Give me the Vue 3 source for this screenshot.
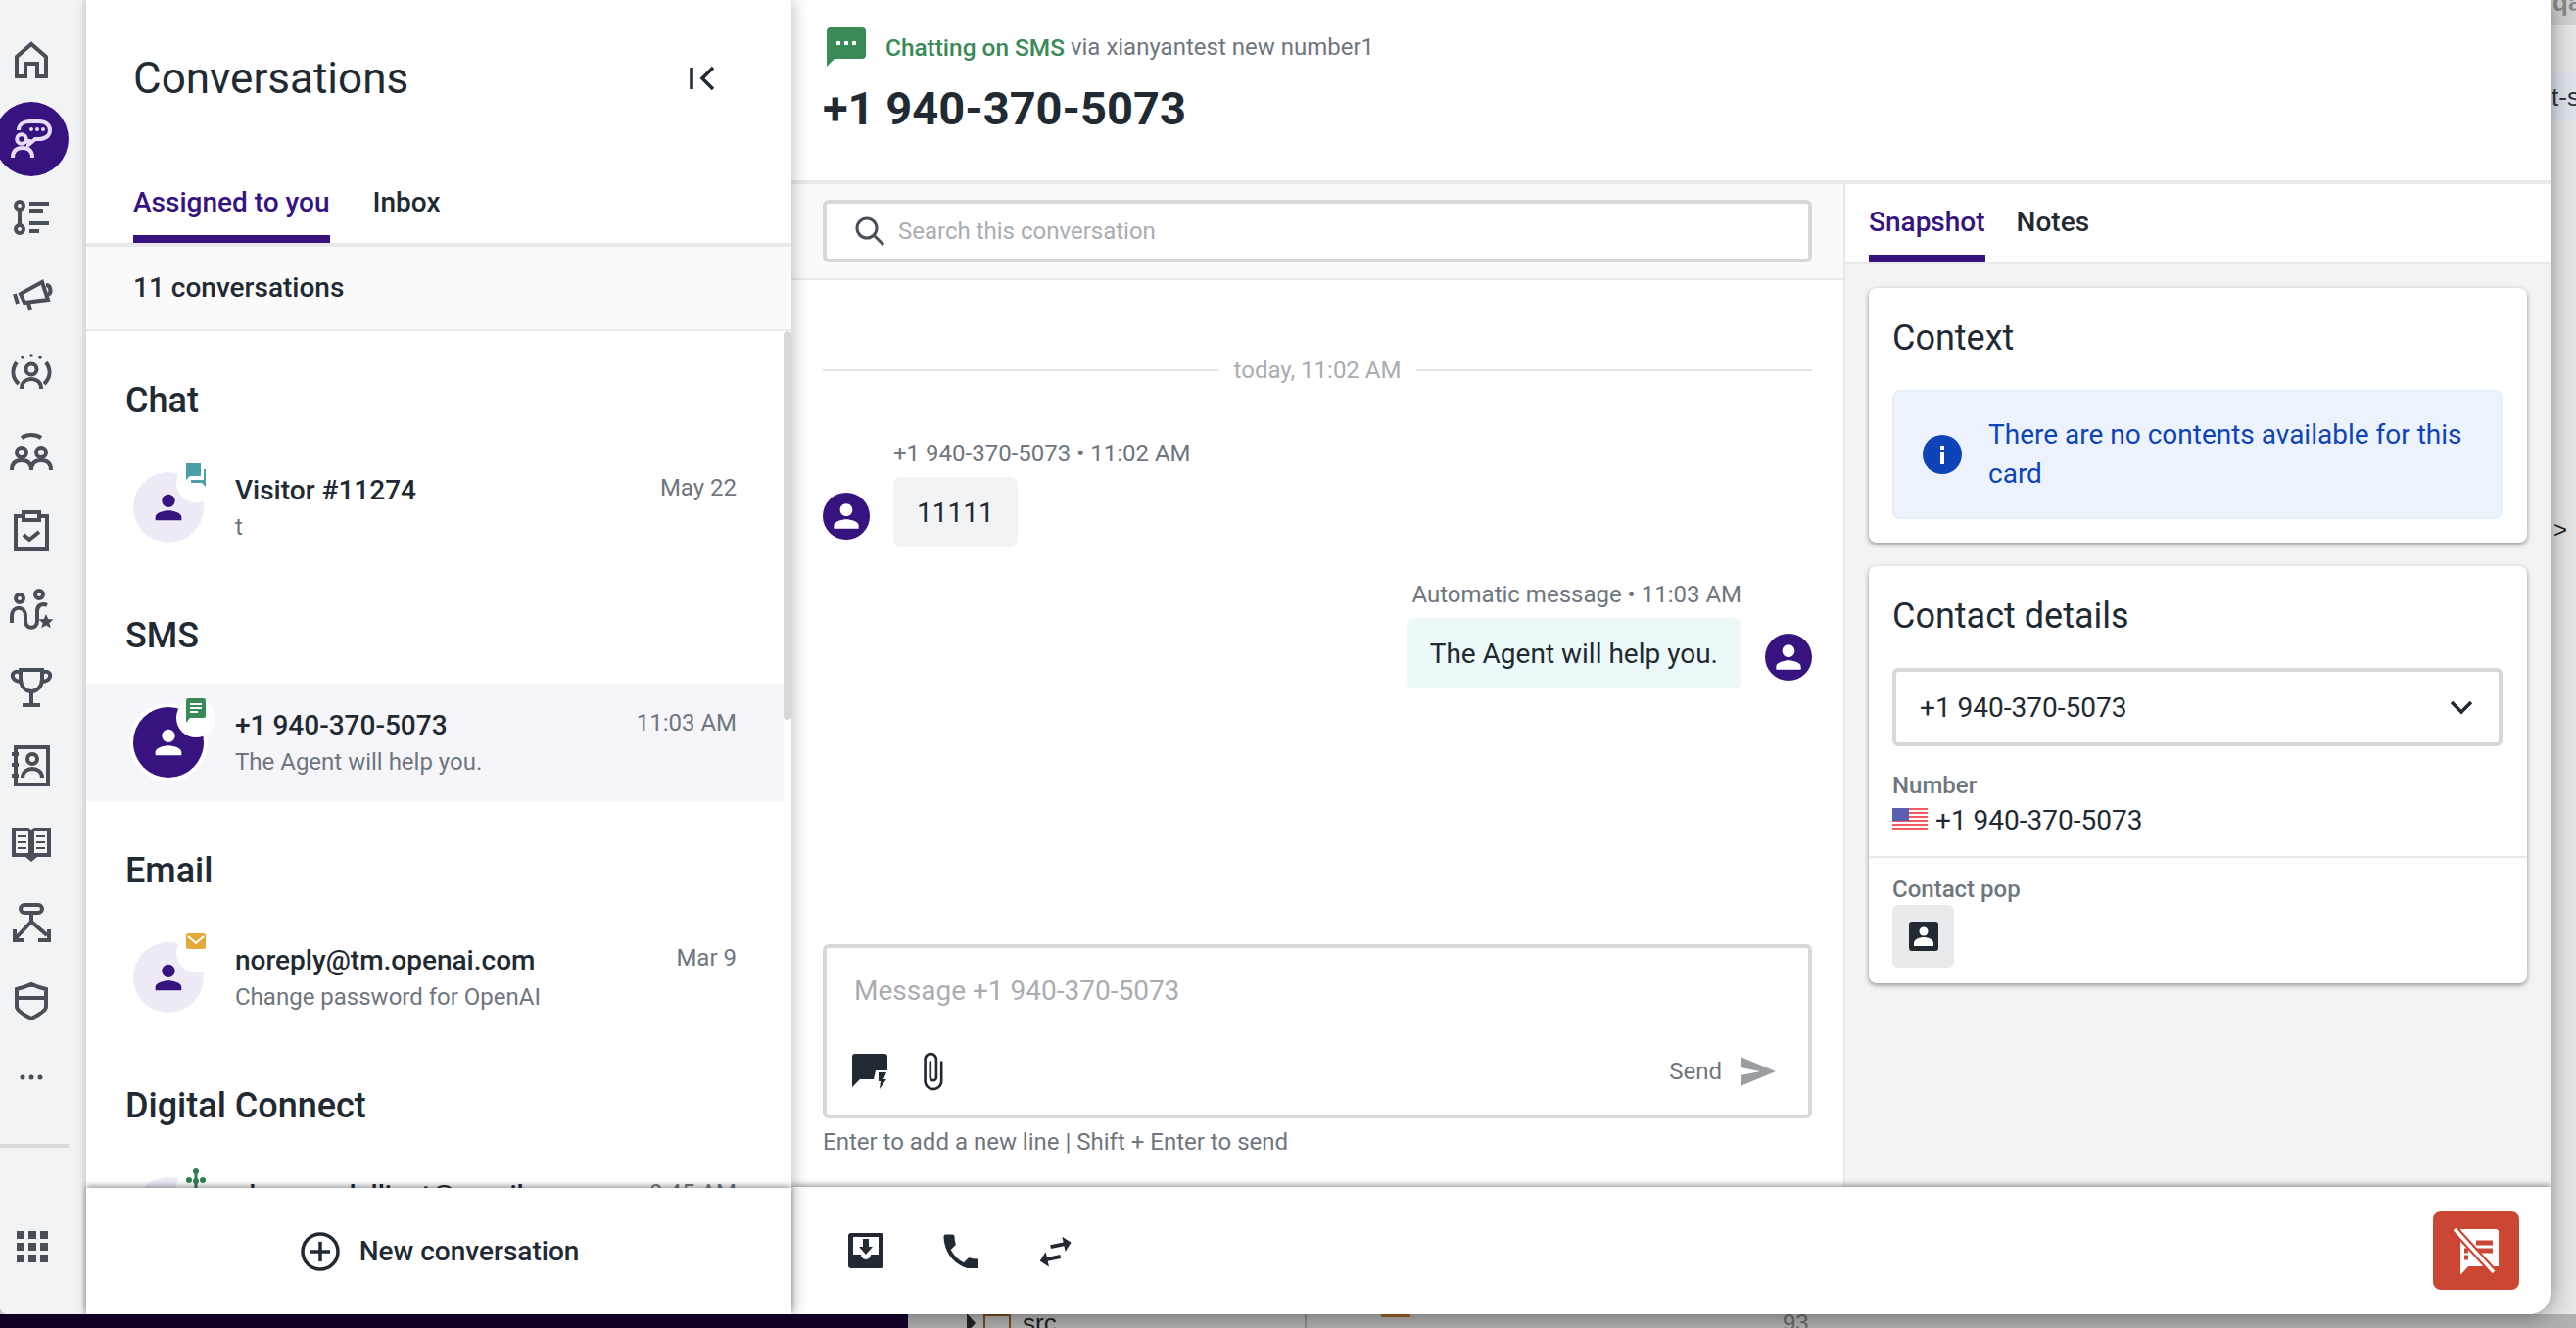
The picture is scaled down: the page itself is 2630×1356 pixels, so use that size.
<template>
  <div class="desktop">
    <div class="top">
      <div class="window">
        <!-- icon rail -->
        <nav class="rail">
          <div class="nav-item">
            <svg class="nav-icon" viewBox="0 0 48 48"><path d="M9 40V20L24 7l15 13v20h-9V27H18v13z" /></svg>
          </div>
          <div class="nav-item nav-item--active">
            <span class="nav-active">
              <svg class="nav-icon nav-icon--active" viewBox="0 0 48 48">
                <path d="M11 15c0-6 5-9 11-9h10c7 0 11 4 11 9s-4 9-11 9h-4l-7 6 1-6" />
                <circle class="dot" cx="24" cy="14" r="2" />
                <circle class="dot" cx="30" cy="14" r="2" />
                <circle class="dot" cx="36" cy="14" r="2" />
                <circle cx="14" cy="24" r="4.800" />
                <path d="M5 43c0-7 4-10 10-10s10 3 10 10" />
              </svg>
            </span>
          </div>
          <div class="nav-item">
            <svg class="nav-icon" viewBox="0 0 48 48">
              <circle cx="12" cy="12" r="4" /><circle cx="12" cy="36" r="4" />
              <path d="M12 16v16M22 10h20M22 17h14M22 30h20M22 38h10" />
            </svg>
          </div>
          <div class="nav-item">
            <svg class="nav-icon" viewBox="0 0 48 48">
              <path d="M13 22l22-12 6 18-24 3z" />
              <path d="M7 22l3 10M21 31l2 8M39 13c5 0 6 8 2 10" />
            </svg>
          </div>
          <div class="nav-item">
            <svg class="nav-icon" viewBox="0 0 48 48">
              <circle cx="24" cy="19" r="5.500" />
              <path d="M14 39c0-7 5-10 10-10s10 3 10 10M9 12c-5 7-5 15 2 22M39 12c5 7 5 15-2 22" />
              <circle class="dot" cx="15" cy="7" r="1.800" /><circle class="dot" cx="24" cy="5" r="1.800" /><circle class="dot" cx="33" cy="7" r="1.800" />
            </svg>
          </div>
          <div class="nav-item">
            <svg class="nav-icon" viewBox="0 0 48 48">
              <path d="M14 9c6-4 14-4 20 0" />
              <circle cx="14" cy="24" r="5" /><circle cx="34" cy="24" r="5" />
              <path d="M4 42c0-7 4-10 10-10s10 3 10 10c0-7 4-10 10-10s10 3 10 10" />
            </svg>
          </div>
          <div class="nav-item">
            <svg class="nav-icon" viewBox="0 0 48 48">
              <path d="M16 9H8v34h32V9h-8" />
              <rect x="16" y="5" width="16" height="8" />
              <path d="M16 28l6 5 10-8" />
            </svg>
          </div>
          <div class="nav-item">
            <svg class="nav-icon" viewBox="0 0 48 48">
              <circle cx="12" cy="13" r="4" /><circle cx="32" cy="9" r="4" />
              <path d="M4 38v-7c0-11 14-11 14 0v5c0 9 12 9 12 0V26c0-7 6-8 10-6" />
              <path class="dot" d="M39 29l2.200 5 5.300.500-4 3.500 1.200 5.300-4.700-2.800-4.700 2.800 1.200-5.300-4-3.500 5.300-.500z" />
            </svg>
          </div>
          <div class="nav-item">
            <svg class="nav-icon" viewBox="0 0 48 48">
              <path d="M13 6h22v9c0 8-5 13-11 13s-11-5-11-13z" />
              <path d="M13 9c-5-3-9 0-8 4s5 5 9 5M35 9c5-3 9 0 8 4s-5 5-9 5M24 28v14M15 42h18" />
            </svg>
          </div>
          <div class="nav-item">
            <svg class="nav-icon" viewBox="0 0 48 48">
              <rect x="8" y="5" width="33" height="38" />
              <circle cx="25" cy="17" r="5" />
              <path d="M15 36c0-6 5-9 10-9s10 3 10 9M4 12h7M4 23h7M4 34h7" />
            </svg>
          </div>
          <div class="nav-item">
            <svg class="nav-icon" viewBox="0 0 48 48">
              <path class="dot" d="M4 7h17l3 2 3-2h17v30H30l-6 5-6-5H4z" />
              <path class="page" d="M8 11h13v22H8zM27 11h13v22H27z" />
              <path class="lines" d="M10 16h9M10 22h9M10 28h9M29 16h9M29 22h9M29 28h9" />
            </svg>
          </div>
          <div class="nav-item">
            <svg class="nav-icon" viewBox="0 0 48 48">
              <rect x="13" y="6" width="22" height="8" rx="4" />
              <path d="M24 14v9L8 40M24 23l16 14M7 31v11h10M42 31v11H31" />
            </svg>
          </div>
          <div class="nav-item">
            <svg class="nav-icon" viewBox="0 0 48 48">
              <path d="M9 12l7-2 8-3 8 3 7 2v18c0 4-7 8-15 12-8-4-15-8-15-12z" />
              <path d="M9 21h30" />
            </svg>
          </div>
          <div class="nav-item nav-item--more">
            <svg class="nav-icon" viewBox="0 0 48 48">
              <circle class="dot" cx="15" cy="24" r="2.500" /><circle class="dot" cx="24" cy="24" r="2.500" /><circle class="dot" cx="33" cy="24" r="2.500" />
            </svg>
          </div>
          <div class="rail-divider"></div>
          <svg class="rail-apps" viewBox="0 0 32 32">
            <rect v-for="cell in appCells" :key="cell.id" :x="cell.x" :y="cell.y" width="8" height="8" />
          </svg>
        </nav>

        <!-- conversation list -->
        <aside class="conv-panel">
          <div class="conv-title-row">
            <h1 class="conv-title">Conversations</h1>
            <svg class="collapse" viewBox="0 0 26 26"><path d="M2 2v22M24 2L13 13l11 11" /></svg>
          </div>
          <div class="tabs conv-tabs">
            <span class="tab tab--active">Assigned to you</span>
            <span class="tab">Inbox</span>
          </div>
          <div class="conv-count">11 conversations</div>
          <div class="conv-list">
            <span class="scroll-thumb"></span>
            <section v-for="group in groups" :key="group.name" class="group">
              <h2 class="group-title">{{ group.name }}</h2>
              <div class="row" :class="{ 'row--selected': group.selected }">
                <div class="avatar" :class="{ 'avatar--solid': group.selected }">
                  <svg class="person" viewBox="0 0 24 24"><path :d="personPath" /></svg>
                  <span class="badge">
                    <svg v-if="group.badge === 'chat'" viewBox="0 0 20 28"><path fill="#4a9fa8" d="M0 0h15v13H4l-4 4z" /><path fill="#4a9fa8" d="M18 6h2v18l-4-4H5v-3h13z" /></svg>
                    <svg v-else-if="group.badge === 'sms'" viewBox="0 0 20 28"><path fill="#3a8a55" d="M2 0h16a2 2 0 0 1 2 2v16a2 2 0 0 1-2 2H4l-4 5V2a2 2 0 0 1 2-2z" /><path fill="none" stroke="#fff" stroke-width="2" d="M4 6h12M4 10h12M4 14h8" /></svg>
                    <svg v-else-if="group.badge === 'email'" viewBox="0 0 20 28"><rect width="20" height="16" rx="2" fill="#e6a93c" /><path fill="none" stroke="#fff" stroke-width="2" d="M2 3l8 7 8-7" /></svg>
                    <svg v-else viewBox="0 0 20 28"><g fill="#2e7d4f"><circle cx="10" cy="3" r="3" /><circle cx="3" cy="12" r="3" /><circle cx="17" cy="12" r="3" /><circle cx="10" cy="13" r="3" /><rect x="8.500" y="3" width="3" height="22" /></g></svg>
                  </span>
                </div>
                <div class="row-text">
                  <div class="row-name">{{ group.contact }}</div>
                  <div class="row-preview">{{ group.preview }}</div>
                </div>
                <div class="row-time">{{ group.time }}</div>
              </div>
            </section>
          </div>
          <div class="conv-footer">
            <svg class="plus" viewBox="0 0 40 40"><circle cx="20" cy="20" r="18" /><path d="M20 10v20M10 20h20" /></svg>
            <span>New conversation</span>
          </div>
        </aside>

        <!-- main area -->
        <main class="main">
          <header class="main-header">
            <div class="channel">
              <svg class="channel-icon" viewBox="0 0 40 40">
                <path fill="#3a8a55" d="M4 0h32a4 4 0 0 1 4 4v24a4 4 0 0 1-4 4H8l-8 8V4a4 4 0 0 1 4-4z" />
                <rect x="10" y="14" width="4" height="4" fill="#fff" /><rect x="18" y="14" width="4" height="4" fill="#fff" /><rect x="26" y="14" width="4" height="4" fill="#fff" />
              </svg>
              <span class="channel-name">Chatting on SMS</span>
              <span class="channel-via">via xianyantest new number1</span>
            </div>
            <div class="phone-title">+1 940-370-5073</div>
          </header>

          <div class="main-body">
            <div class="thread">
              <div class="search-bar">
                <div class="search-input">
                  <svg class="search-icon" viewBox="0 0 32 32"><circle cx="13" cy="13" r="10" /><path d="M20 20l10 10" /></svg>
                  <span>Search this conversation</span>
                </div>
              </div>

              <div class="messages">
                <div class="date-line"><span>today, 11:02 AM</span></div>
                <div class="msg">
                  <div class="msg-avatar"><svg class="person" viewBox="0 0 24 24"><path :d="personPath" /></svg></div>
                  <div class="msg-body">
                    <div class="msg-meta">+1 940-370-5073 • 11:02 AM</div>
                    <div class="bubble">11111</div>
                  </div>
                </div>
                <div class="msg msg--out">
                  <div class="msg-body">
                    <div class="msg-meta">Automatic message • 11:03 AM</div>
                    <div class="bubble bubble--out">The Agent will help you.</div>
                  </div>
                  <div class="msg-avatar"><svg class="person" viewBox="0 0 24 24"><path :d="personPath" /></svg></div>
                </div>
              </div>

              <div class="composer-wrap">
                <div class="composer">
                  <div class="composer-input">Message +1 940-370-5073</div>
                  <div class="composer-tools">
                    <svg class="tool-quick" viewBox="0 0 36 36">
                      <path fill="#212a33" d="M3 0h30a3 3 0 0 1 3 3v14H24l-2 9H8l-8 8V3a3 3 0 0 1 3-3z" />
                      <path fill="#212a33" d="M27 19h8l-3 7h3l-7 10 1-8h-2z" />
                    </svg>
                    <svg class="tool-clip" viewBox="0 0 24 24"><path d="M16.500 6v11.500c0 2.210-1.790 4-4 4s-4-1.790-4-4V5c0-1.380 1.120-2.500 2.500-2.500s2.500 1.120 2.500 2.500v10.500c0 .55-.45 1-1 1s-1-.45-1-1V6H10v9.500c0 1.380 1.120 2.500 2.500 2.500s2.500-1.120 2.500-2.500V5c0-2.210-1.790-4-4-4S7 2.790 7 5v12.500c0 3.040 2.460 5.500 5.500 5.500s5.500-2.460 5.500-5.500V6h-1.500z" /></svg>
                    <span class="send-label">Send</span>
                    <svg class="send-icon" viewBox="0 0 36 30"><path d="M0 0l36 15L0 30V19l20-4L0 11z" /></svg>
                  </div>
                </div>
                <div class="hint">Enter to add a new line | Shift + Enter to send</div>
              </div>
            </div>

            <div class="side">
              <div class="tabs side-tabs">
                <span class="tab tab--active">Snapshot</span>
                <span class="tab">Notes</span>
              </div>
              <div class="side-body">
                <div class="card">
                  <h3 class="card-title">Context</h3>
                  <div class="alert">
                    <svg class="alert-icon" viewBox="0 0 40 40"><circle cx="20" cy="20" r="20" fill="#0f43b8" /><rect x="18" y="18" width="4" height="12" fill="#fff" /><rect x="18" y="11" width="4" height="4" fill="#fff" /></svg>
                    <span>There are no contents available for this card</span>
                  </div>
                </div>
                <div class="card card--contact">
                  <h3 class="card-title">Contact details</h3>
                  <div class="select">
                    <span>+1 940-370-5073</span>
                    <svg class="select-chevron" viewBox="0 0 24 16"><path d="M2 3l10 10L22 3" /></svg>
                  </div>
                  <div class="field">
                    <div class="field-label">Number</div>
                    <div class="field-value">
                      <svg class="flag" viewBox="0 0 36 24">
                        <rect width="36" height="24" rx="2" fill="#fff" />
                        <rect v-for="y in flagStripes" :key="y" y="0" :transform="`translate(0 ${y})`" width="36" height="2" fill="#f25a5f" />
                        <rect width="17" height="13" fill="#5a5fb0" />
                      </svg>
                      <span>+1 940-370-5073</span>
                    </div>
                  </div>
                  <div class="field field--pop">
                    <div class="field-label">Contact pop</div>
                    <div class="pop-button">
                      <svg viewBox="0 0 30 30"><rect width="30" height="30" rx="3" fill="#212a33" /><circle cx="15" cy="10" r="4.500" fill="#fff" /><path fill="#fff" d="M5 25v-3c0-4 6-6 10-6s10 2 10 6v3z" /></svg>
                    </div>
                  </div>
                </div>
              </div>
            </div>
          </div>

          <footer class="main-footer">
            <div class="footer-actions">
              <svg viewBox="0 0 36 36">
                <rect width="36" height="36" rx="3" fill="#212a33" />
                <path fill="#fff" d="M5 4h26v18h-8a5 5 0 0 1-10 0H5z" />
                <path fill="#212a33" d="M15 6h6v8h4l-7 8-7-8h4z" />
              </svg>
              <svg viewBox="0 0 36 36"><path fill="#212a33" transform="translate(-4.500 -4.500) scale(2)" d="M6.620 10.790c1.440 2.830 3.760 5.140 6.590 6.590l2.200-2.200c.27-.27.67-.36 1.020-.24 1.120.37 2.330.57 3.570.57.55 0 1 .45 1 1V20c0 .55-.45 1-1 1-9.390 0-17-7.610-17-17 0-.55.45-1 1-1h3.500c.55 0 1 .45 1 1 0 1.250.2 2.450.57 3.570.11.35.03.74-.25 1.020l-2.200 2.200z" /></svg>
              <svg viewBox="0 0 36 36"><path fill="#212a33" transform="rotate(-12 18 18) translate(-4 -4) scale(1.950)" d="M6.990 11L3 15l3.990 4v-3H14v-2H6.990v-3zM21 9l-3.990-4v3H10v2h7.010v3L21 9z" /></svg>
            </div>
            <div class="end-chat">
              <svg viewBox="0 0 48 48">
                <path fill="#fff" d="M8 5h36a3 3 0 0 1 3 3v35H16l-8 9z" transform="translate(0 -3)" />
                <path fill="none" stroke="#cb4633" stroke-width="5" d="M24 16h17M24 24h17M12 24h4M12 31h4" />
                <path fill="none" stroke="#cb4633" stroke-width="8" d="M2 2l40 44" />
                <path fill="none" stroke="#fff" stroke-width="3.500" d="M2 2l40 44" />
              </svg>
            </div>
          </footer>
        </main>
      </div>

      <!-- whatever window is behind on the right -->
      <div class="back-right">
        <div class="back-top">qa</div>
        <div class="back-band">t-s</div>
        <div class="back-code"><span>&gt;</span><em>a</em></div>
      </div>
    </div>

    <!-- and along the bottom -->
    <div class="dock">
      <div class="dock-navy"></div>
      <div class="dock-tree">
        <span class="dock-arrow"></span>
        <span class="dock-folder"></span>
        <span class="dock-src">src</span>
      </div>
      <div class="dock-editor">
        <span class="dock-orange"></span>
        <span class="dock-line-no">93</span>
      </div>
    </div>
  </div>
</template>

<script setup>
const personPath =
  'M12 12c2.210 0 4-1.790 4-4s-1.790-4-4-4-4 1.790-4 4 1.790 4 4 4zm0 2c-2.670 0-8 1.340-8 4v2h16v-2c0-2.660-5.330-4-8-4z'

const groups = [
  { name: 'Chat', contact: 'Visitor #11274', preview: 't', time: 'May 22', badge: 'chat' },
  { name: 'SMS', contact: '+1 940-370-5073', preview: 'The Agent will help you.', time: '11:03 AM', badge: 'sms', selected: true },
  { name: 'Email', contact: 'noreply@tm.openai.com', preview: 'Change password for OpenAI', time: 'Mar 9', badge: 'email' },
  { name: 'Digital Connect', contact: 'sherwoodalliant@gmail', preview: '', time: '9:45 AM', badge: 'digital' },
]

const appCells = []
for (let r = 0; r < 3; r++) {
  for (let c = 0; c < 3; c++) {
    appCells.push({ id: `${r}-${c}`, x: c * 12, y: r * 12 })
  }
}

const flagStripes = [0, 4, 8, 12, 16, 20]
</script>

<style>
html,
body {
  margin: 0;
  background: #e6e6e6;
}
</style>

<style scoped>
* {
  box-sizing: border-box;
}

.desktop {
  width: 2630px;
  height: 1356px;
  overflow: hidden;
  display: flex;
  flex-direction: column;
  background: #e6e6e6;
  font-family: Roboto, "Liberation Sans", sans-serif;
  color: #212a33;
}

.top {
  display: flex;
  height: 1342px;
}

.window {
  position: relative;
  z-index: 2;
  width: 2604px;
  height: 1342px;
  display: flex;
  overflow: hidden;
  background: #fff;
  border-bottom-left-radius: 8px;
  border-bottom-right-radius: 22px;
  box-shadow: 0 0 24px rgba(0, 0, 0, 0.45);
}

/* rail */
.rail {
  width: 88px;
  flex: none;
  padding-top: 22px;
  background: #f2f3f5;
  border-right: 4px solid #e9e9e9;
  display: flex;
  flex-direction: column;
}

.nav-item {
  width: 64px;
  height: 80px;
  display: flex;
  align-items: center;
  justify-content: center;
}

.nav-item--more {
  margin-top: -2px;
}

.nav-icon {
  width: 48px;
  height: 48px;
  fill: none;
  stroke: #484f58;
  stroke-width: 4;
}

.nav-icon .dot {
  fill: #484f58;
  stroke: none;
}

.nav-icon .page {
  fill: #f2f3f5;
  stroke: none;
}

.nav-icon .lines {
  stroke-width: 2;
}

.nav-icon--active {
  stroke: #e6dcf5;
}

.nav-icon--active .dot {
  fill: #e6dcf5;
}

.nav-active {
  flex: none;
  width: 76px;
  height: 76px;
  border-radius: 50%;
  background: #37137f;
  display: flex;
  align-items: center;
  justify-content: center;
}

.rail-divider {
  width: 70px;
  height: 4px;
  margin-top: 28px;
  background: #d9dadc;
}

.rail-apps {
  width: 32px;
  height: 32px;
  margin: 85px 0 0 17px;
  fill: #484f58;
}

/* conversation panel */
.conv-panel {
  position: relative;
  z-index: 2;
  width: 720px;
  flex: none;
  display: flex;
  flex-direction: column;
  background: #fff;
  box-shadow: 3px 0 14px rgba(0, 0, 0, 0.22);
}

.conv-title-row {
  height: 160px;
  flex: none;
  padding: 0 48px;
  display: flex;
  align-items: center;
  justify-content: space-between;
}

.conv-title {
  margin: 0;
  font-size: 44px;
  font-weight: 400;
}

.collapse {
  width: 26px;
  height: 26px;
  margin-right: 30px;
  fill: none;
  stroke: #212a33;
  stroke-width: 3.5;
}

.tabs {
  display: flex;
  flex: none;
}

.tab {
  height: 100%;
  font-size: 28px;
  font-weight: 500;
  line-height: 40px;
}

.tab--active {
  color: #37137f;
  border-bottom: 8px solid #37137f;
}

.conv-tabs {
  height: 92px;
  padding: 27px 48px 0;
  gap: 44px;
  border-bottom: 4px solid #e9e9e9;
}

.conv-count {
  height: 86px;
  flex: none;
  padding: 0 48px 2px;
  display: flex;
  align-items: center;
  font-size: 28px;
  font-weight: 500;
  background: #fafafa;
  border-bottom: 2px solid #e9e9e9;
}

.conv-list {
  position: relative;
  flex: 1;
  min-height: 0;
  overflow: hidden;
}

.scroll-thumb {
  position: absolute;
  top: 0;
  right: 0;
  width: 8px;
  height: 397px;
  border-radius: 4px;
  background: #d6d9dc;
}

.group-title {
  margin: 0;
  padding: 51px 0 29px 40px;
  font-size: 36px;
  font-weight: 500;
  line-height: 40px;
}

.row {
  width: 712px;
  height: 120px;
  padding: 0 48px 0 48px;
  display: flex;
}

.row--selected {
  background: #f6f5fa;
}

.avatar {
  position: relative;
  flex: none;
  width: 72px;
  height: 72px;
  margin-top: 24px;
  border-radius: 50%;
  background: #eeeaf6;
  display: flex;
  align-items: center;
  justify-content: center;
  fill: #37137f;
}

.avatar--solid {
  background: #37137f;
  fill: #fff;
  box-shadow: 0 0 0 4px #fff;
}

.person {
  width: 40px;
  height: 40px;
}

.badge {
  position: absolute;
  left: 44px;
  top: -9px;
  width: 40px;
  height: 40px;
  border-radius: 50%;
  background: #fff;
  display: flex;
  align-items: flex-start;
  justify-content: center;
}

.badge svg {
  width: 20px;
  height: 28px;
}

.row-text {
  flex: 1;
  min-width: 0;
  padding: 24px 0 0 32px;
}

.row-name {
  font-size: 28px;
  font-weight: 500;
  line-height: 38px;
}

.row-preview {
  font-size: 24px;
  line-height: 36px;
  color: #6e7680;
}

.row-time {
  padding-top: 22px;
  font-size: 24px;
  line-height: 36px;
  color: #6e7680;
}

.conv-footer {
  position: relative;
  flex: none;
  height: 129px;
  padding-left: 2px;
  display: flex;
  align-items: center;
  justify-content: center;
  gap: 20px;
  font-size: 28px;
  font-weight: 500;
  background: #fff;
  box-shadow: 0 -2px 6px rgba(0, 0, 0, 0.4);
}

.plus {
  width: 40px;
  height: 40px;
  fill: none;
  stroke: #212a33;
  stroke-width: 3.5;
}

/* main */
.main {
  flex: 1;
  min-width: 0;
  display: flex;
  flex-direction: column;
}

.main-header {
  height: 188px;
  flex: none;
  padding: 28px 32px 0;
  border-bottom: 4px solid #e9e9e9;
}

.channel {
  height: 40px;
  display: flex;
  align-items: center;
  font-size: 24px;
}

.channel-icon {
  width: 40px;
  height: 40px;
  margin: 0 20px 0 4px;
}

.channel-name {
  font-size: 24.4px;
  font-weight: 500;
  color: #3a8a55;
}

.channel-via {
  margin-left: 6px;
  color: #6e7680;
}

.phone-title {
  margin-top: 19px;
  font-size: 47px;
  font-weight: 700;
  line-height: 48px;
}

.main-body {
  flex: 1;
  min-height: 0;
  display: flex;
}

.thread {
  width: 1076px;
  flex: none;
  display: flex;
  flex-direction: column;
  border-right: 2px solid #e9e9e9;
}

.search-bar {
  height: 98px;
  flex: none;
  padding: 16px 32px;
  background: #fafafa;
  border-bottom: 2px solid #e9e9e9;
}

.search-input {
  height: 64px;
  padding: 0 28px;
  display: flex;
  align-items: center;
  gap: 13px;
  font-size: 24px;
  color: #a9adb2;
  background: #fff;
  border: 4px solid #d6d9dc;
  border-radius: 6px;
}

.search-icon {
  width: 32px;
  height: 32px;
  fill: none;
  stroke: #484f58;
  stroke-width: 3;
}

.messages {
  flex: 1;
  min-height: 0;
  padding: 76px 32px 0;
  display: flex;
  flex-direction: column;
  gap: 32px;
}

.date-line {
  height: 32px;
  margin-bottom: 21px;
  display: flex;
  align-items: center;
  gap: 16px;
  font-size: 24px;
  color: #a9adb2;
}

.date-line::before,
.date-line::after {
  content: "";
  flex: 1;
  height: 2px;
  background: #e3e4e6;
}

.msg {
  display: flex;
  align-items: flex-end;
  gap: 24px;
}

.msg--out {
  justify-content: flex-end;
}

.msg-avatar {
  flex: none;
  width: 48px;
  height: 48px;
  margin-bottom: 8px;
  border-radius: 50%;
  background: #37137f;
  fill: #fff;
  display: flex;
  align-items: center;
  justify-content: center;
}

.msg-avatar .person {
  width: 38px;
  height: 38px;
}

.msg-body {
  display: flex;
  flex-direction: column;
  align-items: flex-start;
  gap: 8px;
}

.msg--out .msg-body {
  align-items: flex-end;
}

.msg-meta {
  font-size: 24px;
  line-height: 32px;
  color: #6e7680;
}

.bubble {
  height: 72px;
  padding: 0 24px;
  display: flex;
  align-items: center;
  font-size: 28px;
  border-radius: 8px;
  background: #f2f3f5;
}

.bubble--out {
  background: #edf8f9;
}

.composer-wrap {
  flex: none;
  padding: 0 32px 30px;
}

.composer {
  height: 178px;
  padding: 24px 33px 24px 28px;
  display: flex;
  flex-direction: column;
  justify-content: space-between;
  border: 4px solid #d6d9dc;
  border-radius: 6px;
}

.composer-input {
  font-size: 28px;
  line-height: 40px;
  color: #a9adb2;
}

.composer-tools {
  height: 40px;
  display: flex;
  align-items: center;
}

.tool-quick {
  width: 36px;
  height: 36px;
  margin-left: -2px;
}

.tool-clip {
  width: 42px;
  height: 42px;
  margin-left: 25px;
  fill: #212a33;
}

.send-label {
  margin-left: auto;
  font-size: 24px;
  color: #6e7680;
}

.send-icon {
  width: 36px;
  height: 30px;
  margin-left: 19px;
  fill: #9a9ea3;
}

.hint {
  margin-top: 8px;
  font-size: 24px;
  line-height: 32px;
  color: #6e7680;
}

/* snapshot side */
.side {
  flex: 1;
  min-width: 0;
  display: flex;
  flex-direction: column;
  background: #f2f3f5;
}

.side-tabs {
  height: 82px;
  padding: 19px 24px 0;
  gap: 32px;
  background: #fff;
  border-bottom: 2px solid #e9e9e9;
}

.side-body {
  padding: 24px;
  display: flex;
  flex-direction: column;
  gap: 24px;
}

.card {
  padding: 29px 25px 24px 24px;
  background: #fff;
  border-radius: 8px;
  box-shadow: 0 2px 5px rgba(0, 0, 0, 0.4);
}

.card--contact {
  padding-bottom: 0;
}

.card-title {
  margin: 0 0 31px;
  font-size: 36px;
  font-weight: 400;
  line-height: 44px;
}

.alert {
  height: 132px;
  padding: 0 20px 0 29px;
  display: flex;
  align-items: center;
  gap: 27px;
  font-size: 28px;
  line-height: 40px;
  color: #0f43b8;
  background: #ecf3fc;
  border: 2px solid #e6eefa;
  border-radius: 8px;
}

.alert-icon {
  width: 40px;
  height: 40px;
  flex: none;
}

.select {
  height: 80px;
  padding: 0 26px 0 24px;
  display: flex;
  align-items: center;
  justify-content: space-between;
  font-size: 28px;
  border: 4px solid #d6d9dc;
  border-radius: 6px;
}

.select-chevron {
  width: 24px;
  height: 16px;
  fill: none;
  stroke: #212a33;
  stroke-width: 3.5;
}

.field {
  margin: 24px -25px 0 -24px;
  padding: 0 25px 18px 24px;
}

.field--pop {
  margin-top: 0;
  padding: 16px 25px 16px 24px;
  border-top: 2px solid #e9e9e9;
}

.field-label {
  font-size: 24px;
  font-weight: 500;
  line-height: 32px;
  color: #6e7680;
}

.field-value {
  height: 38px;
  display: flex;
  align-items: center;
  gap: 8px;
  font-size: 28px;
}

.flag {
  width: 36px;
  height: 24px;
}

.pop-button {
  width: 63px;
  height: 64px;
  display: flex;
  align-items: center;
  justify-content: center;
  border-radius: 6px;
  background: #e9eaec;
}

.pop-button svg {
  width: 30px;
  height: 30px;
}

.main-footer {
  position: relative;
  flex: none;
  height: 130px;
  padding: 0 32px 0 58px;
  display: flex;
  align-items: center;
  justify-content: space-between;
  background: #fff;
  box-shadow: 0 -2px 6px rgba(0, 0, 0, 0.4);
}

.footer-actions {
  display: flex;
  gap: 60px;
}

.footer-actions svg {
  width: 36px;
  height: 36px;
}

.end-chat {
  width: 88px;
  height: 80px;
  display: flex;
  align-items: center;
  justify-content: center;
  border-radius: 8px;
  background: #cb4633;
}

.end-chat svg {
  width: 48px;
  height: 48px;
}

/* background windows */
.back-right {
  flex: 1;
  min-width: 0;
  overflow: hidden;
  white-space: nowrap;
  font-family: "Liberation Sans", sans-serif;
}

.back-top {
  height: 26px;
  padding-left: 2px;
  font-size: 26px;
  font-weight: 700;
  line-height: 4px;
  color: #8a8a8a;
  background: #d2d2d2;
  overflow: hidden;
}

.back-band {
  height: 48px;
  margin-top: 49px;
  padding-left: 1px;
  line-height: 48px;
  font-size: 26px;
  color: #333;
  background: #dfe4ec;
}

.back-code {
  margin-top: 400px;
  display: flex;
  gap: 10px;
  padding-left: 3px;
  font-size: 24px;
  line-height: 36px;
  color: #222;
}

.back-code em {
  font-style: normal;
  color: #8a1c8a;
}

.dock {
  height: 14px;
  display: flex;
  overflow: hidden;
  background: #b0b0b0;
  font-family: "Liberation Sans", sans-serif;
}

.dock-navy {
  width: 927px;
  flex: none;
  background: #14002b;
}

.dock-tree {
  width: 407px;
  flex: none;
  padding-left: 60px;
  display: flex;
  gap: 8px;
  border-right: 2px solid #8d8d8d;
}

.dock-arrow {
  width: 0;
  height: 0;
  margin-top: -1px;
  border-left: 9px solid #222;
  border-top: 10px solid transparent;
  border-bottom: 10px solid transparent;
}

.dock-folder {
  width: 28px;
  height: 22px;
  border: 2px solid #7a4a1e;
}

.dock-src {
  margin-left: 4px;
  margin-top: -2px;
  font-size: 26px;
  line-height: 22px;
  color: #222;
}

.dock-editor {
  flex: 1;
  display: flex;
}

.dock-orange {
  width: 30px;
  height: 3px;
  margin-left: 76px;
  background: #a0622a;
}

.dock-line-no {
  margin-left: 380px;
  font-size: 24px;
  line-height: 18px;
  color: #6a6a6a;
}
</style>
